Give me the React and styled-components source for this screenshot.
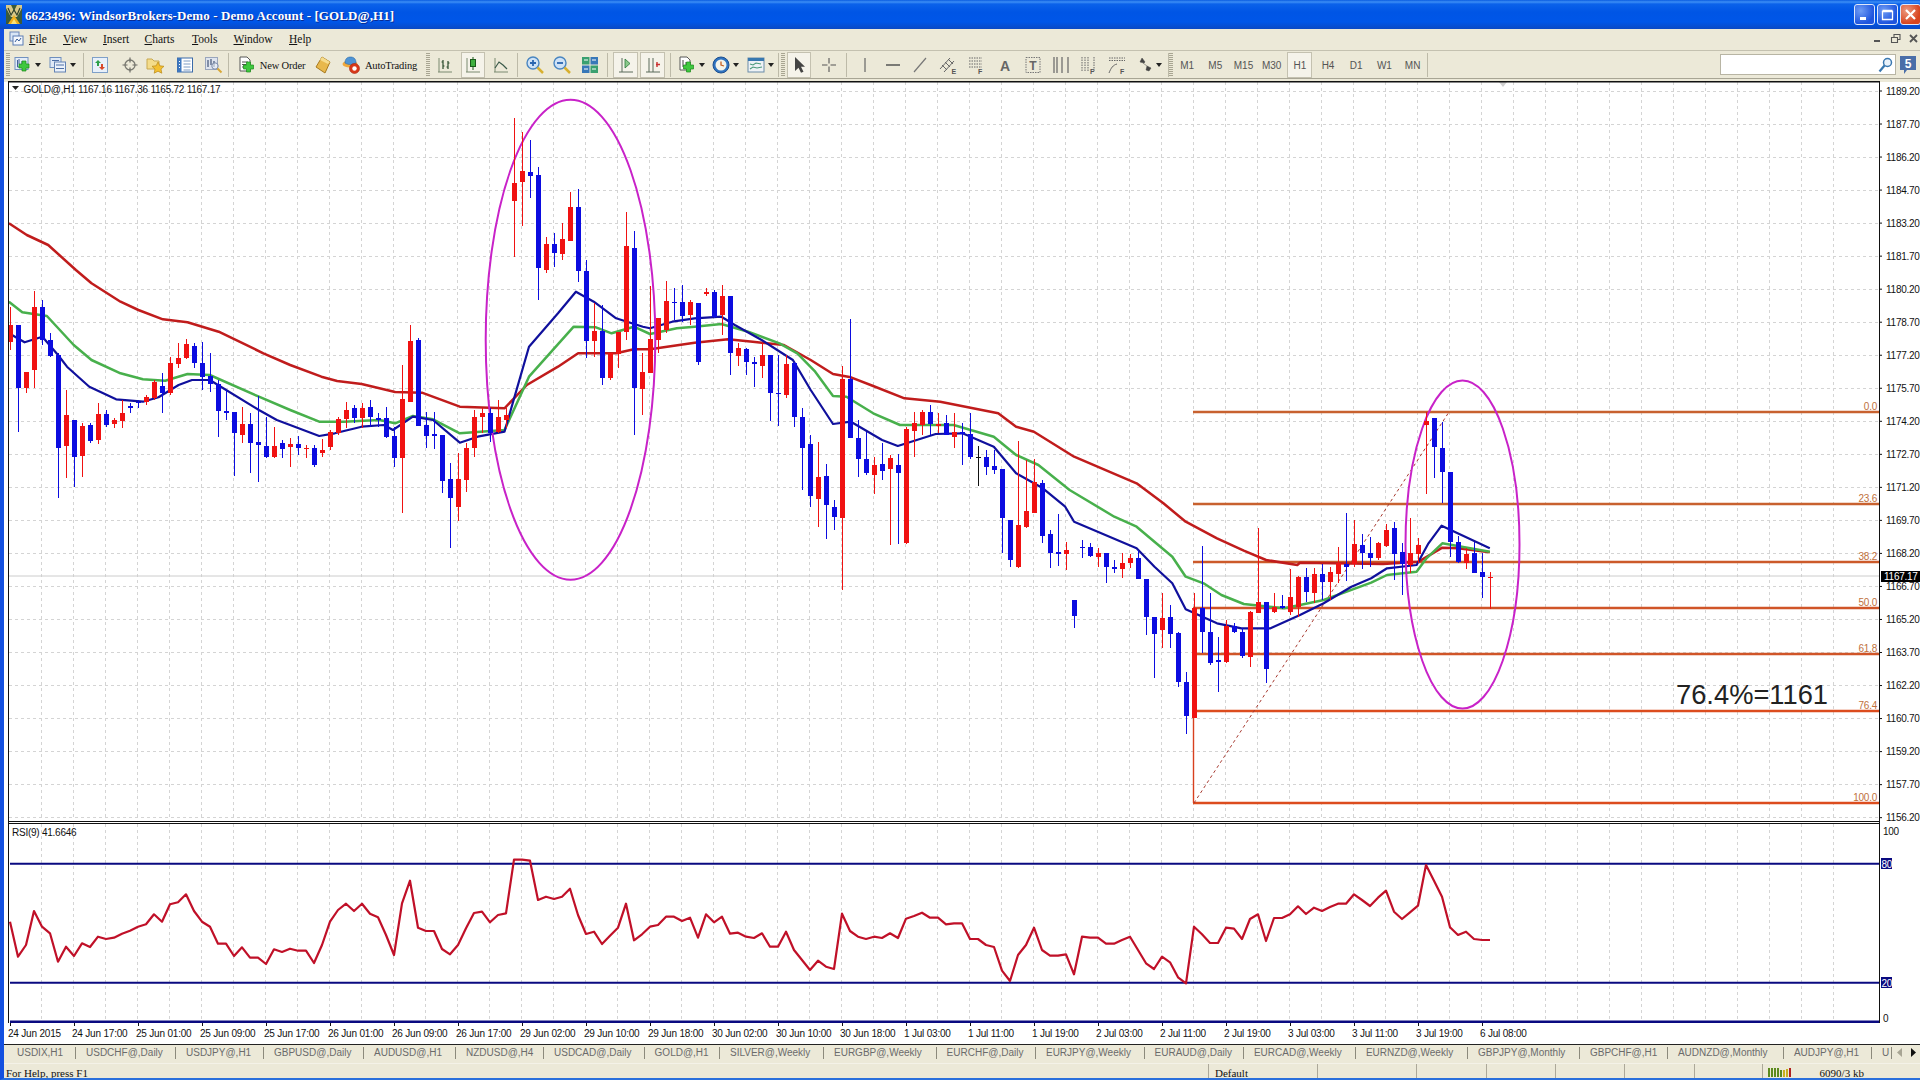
import React from 'react';
import styled, { createGlobalStyle } from 'styled-components';

const GlobalStyle = createGlobalStyle`
  html, body {
    margin: 0;
    padding: 0;
    background: #ece9d8;
    overflow: hidden;
  }
  * {
    box-sizing: border-box;
  }
`;

// chart data, read off the picture. y values are in "v" units: y = 80 + v / 3
const barsA = [
  ['r', 680, 735, 785, 810], ['b', 735, 735, 925, 1055], ['r', 875, 877, 925, 940], ['r', 632, 682, 870, 925],
  ['b', 660, 682, 780, 795], ['b', 760, 780, 828, 830], ['b', 820, 825, 1105, 1255], ['r', 930, 1005, 1098, 1195],
  ['b', 1020, 1020, 1130, 1222], ['r', 1030, 1038, 1128, 1190], ['b', 1030, 1035, 1082, 1090], ['r', 970, 1002, 1080, 1092],
  ['b', 990, 1003, 1035, 1040], ['r', 1015, 1020, 1032, 1045], ['r', 960, 998, 1022, 1045], ['b', 970, 978, 983, 998],
  ['b', 960, 965, 967, 985], ['r', 945, 952, 965, 975], ['r', 900, 905, 955, 960], ['b', 880, 918, 940, 998],
  ['r', 830, 848, 938, 945], ['r', 790, 835, 852, 865], ['r', 778, 792, 835, 838], ['b', 790, 798, 848, 865],
  ['b', 785, 850, 892, 930], ['b', 820, 888, 912, 935], ['b', 900, 912, 992, 1072], ['b', 930, 993, 998, 1020],
  ['b', 995, 995, 1060, 1188], ['r', 980, 1032, 1065, 1088], ['b', 1000, 1032, 1090, 1180], ['b', 948, 1086, 1094, 1205],
  ['b', 1010, 1098, 1130, 1135], ['r', 1040, 1098, 1130, 1135], ['b', 1080, 1090, 1106, 1135], ['r', 1075, 1092, 1100, 1162],
  ['b', 1068, 1093, 1105, 1125], ['r', 1095, 1103, 1106, 1135], ['b', 1095, 1103, 1155, 1160], ['r', 1078, 1110, 1118, 1130],
  ['r', 1050, 1057, 1100, 1110], ['r', 1010, 1018, 1060, 1065], ['r', 965, 990, 1018, 1045], ['b', 975, 985, 1015, 1030],
  ['r', 970, 985, 1015, 1045], ['b', 960, 982, 1010, 1040], ['b', 1000, 1015, 1020, 1040], ['b', 980, 1015, 1072, 1075],
  ['b', 1040, 1068, 1135, 1160], ['r', 855, 958, 1133, 1300], ['r', 735, 783, 965, 965], ['b', 775, 780, 1037, 1037],
  ['b', 995, 1035, 1068, 1103], ['b', 995, 1063, 1068, 1108], ['b', 1065, 1065, 1202, 1240], ['b', 1150, 1198, 1253, 1405],
  ['r', 1120, 1198, 1280, 1322], ['r', 1090, 1105, 1200, 1235], ['r', 990, 1012, 1103, 1130], ['r', 985, 998, 1012, 1060],
  ['b', 985, 1000, 1060, 1085], ['r', 960, 1012, 1055, 1060], ['r', 985, 1005, 1020, 1045], ['r', 115, 310, 362, 530],
  ['r', 155, 272, 305, 438], ['b', 180, 277, 287, 355], ['b', 262, 285, 563, 660], ['r', 472, 492, 570, 578],
  ['b', 460, 492, 520, 562], ['r', 430, 477, 522, 540], ['r', 335, 380, 482, 482], ['b', 327, 380, 572, 605],
  ['b', 540, 573, 782, 835], ['r', 670, 753, 782, 830], ['b', 675, 753, 893, 915], ['r', 818, 818, 895, 900],
  ['r', 760, 755, 822, 865], ['r', 395, 498, 755, 780], ['b', 452, 505, 925, 1065], ['r', 820, 877, 928, 1005],
  ['r', 618, 778, 878, 880], ['r', 715, 715, 780, 820], ['r', 603, 663, 750, 760], ['b', 625, 665, 670, 720],
  ['b', 615, 667, 707, 725], ['r', 660, 667, 705, 735], ['b', 668, 668, 845, 855], ['r', 625, 636, 640, 648],
  ['b', 630, 636, 710, 715], ['r', 615, 648, 705, 765], ['b', 648, 648, 820, 885], ['r', 790, 805, 828, 858]
];

// same thing, y = 300 + v / 3
const barsB = [
  ['b', 145, 147, 185, 225], ['b', 170, 186, 193, 262], ['r', 130, 165, 197, 235], ['b', 165, 165, 278, 362],
  ['b', 165, 278, 283, 378], ['r', 165, 192, 285, 295], ['b', 185, 188, 352, 380], ['b', 325, 352, 443, 570],
  ['b', 405, 432, 587, 622], ['r', 425, 532, 597, 680], ['b', 492, 528, 614, 718], ['b', 600, 622, 652, 690],
  ['r', 197, 237, 654, 870], ['b', 58, 237, 415, 415], ['b', 360, 415, 478, 532], ['b', 395, 477, 518, 525],
  ['r', 470, 495, 525, 582], ['b', 430, 492, 512, 540], ['r', 465, 475, 507, 735], ['b', 462, 495, 520, 732],
  ['r', 380, 388, 730, 732], ['r', 335, 370, 392, 470], ['r', 330, 337, 375, 405], ['b', 315, 337, 372, 405],
  ['r', 340, 372, 375, 400], ['b', 345, 370, 405, 405], ['r', 340, 397, 412, 445], ['b', 370, 397, 402, 495],
  ['b', 340, 403, 472, 477], ['k', 438, 470, 472, 558], ['b', 450, 472, 500, 525], ['b', 450, 497, 510, 522],
  ['b', 507, 507, 655, 760], ['b', 660, 660, 780, 800], ['r', 422, 675, 800, 805], ['r', 480, 632, 680, 685],
  ['r', 478, 545, 638, 640], ['b', 540, 548, 707, 728], ['b', 690, 702, 758, 805], ['b', 642, 757, 762, 798],
  ['r', 725, 750, 762, 810], ['b', 900, 900, 947, 985], ['b', 720, 740, 745, 775], ['b', 730, 742, 768, 770],
  ['r', 745, 760, 770, 800], ['b', 758, 760, 802, 848], ['b', 780, 802, 805, 820], ['r', 760, 790, 806, 835],
  ['r', 762, 775, 790, 805], ['b', 750, 775, 838, 838], ['b', 838, 838, 950, 1005], ['b', 950, 950, 1002, 1135],
  ['r', 878, 955, 990, 1045], ['b', 915, 950, 1003, 1045], ['b', 995, 998, 1145, 1160], ['b', 1115, 1145, 1248, 1302],
  ['r', 880, 925, 1255, 1255], ['b', 738, 925, 995, 1060], ['b', 880, 995, 1088, 1095], ['b', 1010, 1080, 1085, 1175],
  ['r', 960, 978, 1085, 1090], ['b', 970, 978, 995, 1000], ['b', 985, 995, 1068, 1075], ['r', 932, 936, 1070, 1100],
  ['r', 685, 905, 938, 940], ['b', 905, 907, 1108, 1150], ['r', 880, 922, 935, 938], ['b', 885, 918, 925, 928],
  ['r', 808, 892, 935, 945], ['r', 828, 832, 920, 950]
];

// y = 370 + v / 3
const barsC = [
  ['b', 595, 622, 665, 695], ['r', 595, 612, 668, 700], ['b', 582, 612, 635, 690], ['r', 590, 605, 635, 690],
  ['r', 530, 578, 612, 640], ['b', 428, 582, 590, 632], ['r', 450, 522, 583, 592], ['b', 492, 525, 550, 598],
  ['b', 502, 550, 565, 590], ['r', 515, 520, 565, 570], ['r', 462, 480, 527, 530], ['b', 455, 475, 552, 630],
  ['b', 520, 545, 582, 675], ['r', 445, 548, 585, 610], ['r', 505, 525, 552, 580], ['r', 125, 153, 165, 372],
  ['b', 145, 145, 230, 325], ['b', 155, 235, 305, 400], ['b', 305, 307, 515, 562], ['b', 498, 515, 575, 578],
  ['r', 535, 552, 578, 598], ['b', 515, 550, 608, 610], ['b', 548, 607, 622, 685], ['r', 605, 620, 622, 718]
];

const toBars = (list, base) => list.map(([c, hi, top, bot, lo]) => ({
  c,
  hi: base + hi / 3,
  top: base + top / 3,
  bot: base + bot / 3,
  lo: base + lo / 3
}));

const bars = [...toBars(barsA, 80), ...toBars(barsB, 300), ...toBars(barsC, 370)];

// moving averages in crop coordinates, three crops with their own scale
const pt4 = ([x, y]) => `${(x / 2.24).toFixed(1)},${(80 + y / 3).toFixed(1)}`;
const pt5 = ([x, y]) => `${(650 + x / 2.24).toFixed(1)},${(300 + y / 3).toFixed(1)}`;
const pt6 = ([x, y]) => `${(1300 + x / 2.529).toFixed(1)},${(370 + y / 3).toFixed(1)}`;
const line = (a, b, c) => [...a.map(pt4), ...b.map(pt5), ...c.map(pt6)].join(' ');

const redMa = line(
  [[20, 430], [60, 465], [108, 495], [170, 570], [205, 610], [270, 665], [310, 690], [365, 718], [420, 727], [490, 755], [590, 820], [650, 855], [720, 890], [755, 903], [810, 912], [885, 936], [945, 938], [1030, 980], [1130, 985], [1180, 915], [1250, 860], [1295, 820], [1380, 820], [1420, 808]],
  [[0, 148], [100, 128], [175, 118], [230, 125], [300, 135], [360, 180], [410, 222], [450, 232], [500, 258], [570, 295], [650, 305], [780, 340], [820, 380], [860, 395], [950, 470], [1090, 550], [1150, 610], [1200, 665], [1270, 715], [1330, 752], [1380, 780], [1450, 795]],
  [[0, 578], [210, 582], [300, 575], [360, 533], [400, 535], [480, 547]]
);

const greenMa = line(
  [[20, 665], [50, 697], [105, 708], [165, 795], [205, 840], [270, 880], [320, 898], [370, 902], [420, 882], [470, 885], [580, 950], [650, 990], [715, 1025], [770, 1025], [850, 1020], [885, 1030], [925, 1008], [970, 1018], [1030, 1060], [1130, 1050], [1185, 890], [1285, 740], [1335, 742], [1370, 760], [1420, 740]],
  [[0, 102], [60, 85], [100, 80], [160, 72], [220, 95], [290, 130], [330, 160], [370, 215], [410, 288], [440, 290], [500, 340], [560, 375], [680, 375], [770, 410], [820, 465], [870, 495], [940, 570], [1040, 650], [1090, 680], [1170, 770], [1200, 830], [1240, 850], [1280, 885], [1330, 912], [1420, 925]],
  [[0, 705], [60, 690], [180, 638], [220, 615], [295, 605], [320, 565], [360, 520], [480, 545]]
);

const blueMa = line(
  [[20, 760], [55, 787], [95, 770], [130, 825], [150, 860], [200, 920], [260, 958], [320, 965], [355, 952], [400, 915], [430, 900], [470, 900], [580, 990], [620, 1020], [715, 1068], [750, 1060], [810, 1040], [860, 1035], [880, 1050], [925, 1010], [970, 1020], [1030, 1088], [1070, 1070], [1130, 1055], [1185, 800], [1250, 700], [1290, 635], [1330, 665], [1380, 715], [1440, 740]],
  [[0, 85], [50, 65], [100, 55], [160, 50], [190, 75], [250, 120], [285, 150], [320, 180], [360, 270], [410, 372], [450, 365], [520, 420], [555, 438], [640, 402], [700, 400], [770, 440], [820, 520], [880, 565], [930, 620], [950, 665], [1090, 745], [1130, 800], [1170, 850], [1200, 928], [1270, 970], [1325, 985], [1390, 985]],
  [[0, 735], [60, 700], [130, 650], [180, 625], [220, 595], [295, 585], [325, 520], [358, 467], [480, 535]]
);

// RSI, one value per bar, y = 815 + v / 3
const rsi = [
  320, 425, 390, 288, 335, 355, 440, 395, 423, 385, 396, 365, 372, 368, 356, 347, 335, 328, 298, 320, 268, 262, 238, 288, 320, 335, 386, 386, 423, 397,
  428, 428, 447, 403, 411, 401, 407, 407, 444, 390, 320, 285, 266, 288, 266, 296, 307, 360, 420, 265, 197, 338, 348, 348, 402, 418, 390, 340, 294, 290,
  322, 300, 295, 134, 134, 137, 255, 245, 252, 245, 221, 300, 357, 350, 387, 362, 338, 266, 376, 358, 335, 330, 305, 305, 318, 308, 368,
  298, 322, 305, 356, 353, 365, 369, 355, 395, 395, 350, 405, 435, 465, 437, 455, 462, 296, 348, 365, 372, 365, 369, 355, 369, 311, 303, 293, 308, 308,
  328, 325, 325, 372, 372, 390, 396, 467, 498, 420, 390, 338, 405, 422, 422, 418, 478, 365, 368, 368, 386, 386, 375, 365, 405, 445, 462, 425, 442, 487,
  505, 335, 358, 384, 384, 338, 341, 372, 312, 298, 378, 309, 309, 298, 274, 297, 278, 288, 276, 266, 266, 238, 255, 273, 248, 227, 290,
  312, 292, 272, 150, 197, 245, 337, 360, 350, 372, 375, 375
];

const barX = i => 10 + 8 * i;
const PLOT_RIGHT = 1879;

const priceTicks = Array.from({ length: 23 }, (_, k) => ({
  label: (1189.2 - 1.5 * k).toFixed(2),
  y: 91 + 33.03 * k
}));
const gridXs = Array.from({ length: 58 }, (_, k) => 9.5 + 32 * k);

const fibs = [
  { label: '0.0', y: 412, color: '#c8612f' },
  { label: '23.6', y: 504, color: '#c8612f' },
  { label: '38.2', y: 562, color: '#cc5a2a' },
  { label: '50.0', y: 608, color: '#d05528' },
  { label: '61.8', y: 654, color: '#d05528' },
  { label: '76.4', y: 711, color: '#dc4c1e' },
  { label: '100.0', y: 803, color: '#dc4c1e' }
];

const timeLabels = [
  '24 Jun 2015', '24 Jun 17:00', '25 Jun 01:00', '25 Jun 09:00', '25 Jun 17:00', '26 Jun 01:00', '26 Jun 09:00', '26 Jun 17:00',
  '29 Jun 02:00', '29 Jun 10:00', '29 Jun 18:00', '30 Jun 02:00', '30 Jun 10:00', '30 Jun 18:00', '1 Jul 03:00', '1 Jul 11:00',
  '1 Jul 19:00', '2 Jul 03:00', '2 Jul 11:00', '2 Jul 19:00', '3 Jul 03:00', '3 Jul 11:00', '3 Jul 19:00', '6 Jul 08:00'
];

const tabs = [
  ['USDIX,H1', 69], ['USDCHF@,Daily', 100], ['USDJPY@,H1', 88], ['GBPUSD@,Daily', 100], ['AUDUSD@,H1', 92], ['NZDUSD@,H4', 88],
  ['USDCAD@,Daily', 100.6], ['GOLD@,H1', 75.4], ['SILVER@,Weekly', 104], ['EURGBP@,Weekly', 112.6], ['EURCHF@,Daily', 99.4],
  ['EURJPY@,Weekly', 108.6], ['EURAUD@,Daily', 99.4], ['EURCAD@,Weekly', 112], ['EURNZD@,Weekly', 112], ['GBPJPY@,Monthly', 112],
  ['GBPCHF@,H1', 88], ['AUDNZD@,Monthly', 116], ['AUDJPY@,H1', 88]
];

const Window = styled.div`
  width: 1920px;
  height: 1080px;
  display: flex;
  flex-direction: column;
  overflow: hidden;
`;

const TitleBar = styled.div`
  height: 29px;
  flex: none;
  display: flex;
  align-items: center;
  padding-left: 6px;
  gap: 3px;
  background: linear-gradient(
    to bottom,
    #0a5ce0 0,
    #3d8ff5 2px,
    #0b62ea 4px,
    #0055e5 12px,
    #0056e8 22px,
    #0a49c4 29px
  );
`;

const TitleText = styled.div`
  margin-top: 2px;
  font: bold 13px 'Liberation Serif', serif;
  letter-spacing: 0.09px;
  color: #fff;
  text-shadow: 1px 1px 0 #0a2a90;
  white-space: nowrap;
`;

const CaptionButtons = styled.div`
  margin-left: auto;
  display: flex;
  gap: 2px;
  align-items: center;
  margin-right: -1px;
`;

const CaptionButton = styled.div`
  width: 21px;
  height: 21px;
  border: 1px solid #dfe8fa;
  border-radius: 3px;
  display: flex;
  align-items: center;
  justify-content: center;
  background: ${p => (p.$close
    ? 'radial-gradient(circle at 30% 30%, #ec9a80, #d8441e 70%)'
    : 'radial-gradient(circle at 30% 30%, #6f9cf4, #1f55de 70%)')};
`;

const Body = styled.div`
  flex: 1;
  min-height: 0;
  display: flex;
  flex-direction: column;
  border-left: 4px solid #1450e0;
  border-bottom: 2px solid #2a6fdc;
`;

const MenuBar = styled.div`
  height: 21px;
  flex: none;
  display: flex;
  align-items: center;
  padding-bottom: 2px;
  background: #ece9d8;
`;

const MenuIcon = styled.div`
  width: 25px;
  padding-left: 5px;
  display: flex;
`;

const MenuItem = styled.div`
  width: ${p => p.$w}px;
  font: 11.5px 'Liberation Serif', serif;
  color: #111;

  &::first-letter {
    text-decoration: underline;
  }
`;

const ChildControls = styled.div`
  margin-left: auto;
  display: flex;
  gap: 3px;
  margin-right: -1px;
`;

const ChildControl = styled.div`
  width: 15px;
  height: 15px;
  display: flex;
  align-items: center;
  justify-content: center;
`;

const Toolbar = styled.div`
  height: 31px;
  flex: none;
  display: flex;
  align-items: flex-start;
  padding-top: 1px;
  background: linear-gradient(to bottom, #ece9d8 0, #ece9d8 27px, #a8a594 27px, #a8a594 28px, #ece9d8 28px);
  border-top: 1px solid #c4c1b0;
`;

const ToolButton = styled.div`
  width: ${p => p.$w}px;
  height: 26px;
  flex: none;
  margin-left: ${p => p.$ml || 0}px;
  display: flex;
  align-items: center;
  justify-content: center;
  gap: ${p => p.$gap || 0}px;
  border: 1px solid ${p => (p.$on ? '#c4c1b0' : 'transparent')};
  background: ${p => (p.$on ? '#f5f3ea' : 'transparent')};
`;

const ToolLabel = styled.span`
  font: 10.5px 'Liberation Serif', serif;
  letter-spacing: -0.15px;
  color: #111;
  white-space: nowrap;
`;

const Divider = styled.div`
  width: ${p => p.$w}px;
  height: 26px;
  flex: none;
  background: linear-gradient(#bdbaa8, #bdbaa8) center / 1px 24px no-repeat;
`;

const Grip = styled.div`
  width: ${p => p.$w}px;
  height: 26px;
  flex: none;
  background: repeating-linear-gradient(to bottom, #a8a592 0 1px, transparent 1px 2px) center / 4px 24px no-repeat;
`;

const PeriodButton = styled.div`
  width: 25px;
  height: 26px;
  margin: 0 1.6px;
  flex: none;
  display: flex;
  align-items: center;
  justify-content: center;
  font: 10px 'Liberation Sans', sans-serif;
  color: #555;
  border: 1px solid ${p => (p.$on ? '#c4c1b0' : 'transparent')};
  background: ${p => (p.$on ? '#f5f3ea' : 'transparent')};
`;

const SearchBox = styled.div`
  width: 176px;
  height: 21px;
  margin: 2px 0 0 auto;
  flex: none;
  display: flex;
  align-items: center;
  justify-content: flex-end;
  padding-right: 2px;
  background: #fff;
  border: 1px solid #b8b5a4;
`;

const CommunityButton = styled.div`
  width: 24px;
  height: 24px;
  margin-top: 1px;
  flex: none;
  display: flex;
  align-items: center;
  justify-content: center;
`;

const ChartSvg = styled.svg`
  display: block;
  flex: none;
  background: #fff;
`;

const AxisText = styled.text`
  font: 10px 'Liberation Sans', sans-serif;
  letter-spacing: -0.25px;
  fill: ${p => p.$fill || '#111'};
`;

const NoteText = styled.text`
  font: 27.3px 'Liberation Sans', sans-serif;
  fill: #222;
`;

const TimeAxis = styled.div`
  height: 21px;
  flex: none;
  display: flex;
  background: #fff;
  padding-left: 4px;
`;

const TimeLabel = styled.div`
  width: 64px;
  flex: none;
  padding-top: 5px;
  font: 10px 'Liberation Sans', sans-serif;
  letter-spacing: -0.2px;
  color: #111;
  white-space: nowrap;
  background: linear-gradient(#111, #111) 1.5px 0 / 1px 3px no-repeat;
`;

const TabBar = styled.div`
  height: 19px;
  flex: none;
  display: flex;
  align-items: center;
  padding: 0 0 3px 3px;
  background: #ece9d8;
  border-top: 1px solid #222;
`;

const Tab = styled.div`
  width: ${p => p.$w}px;
  height: 12px;
  flex: none;
  display: flex;
  align-items: center;
  padding-left: 10px;
  font: 10px 'Liberation Sans', sans-serif;
  color: #6b6b6b;
  border-right: 1px solid #8c8a7c;
  white-space: nowrap;
  overflow: hidden;
`;

const TabArrows = styled.div`
  margin-left: auto;
  display: flex;
  gap: 9px;
  padding-right: 4px;
`;

const StatusBar = styled.div`
  height: 15px;
  flex: none;
  display: flex;
  background: #ece9d8;
  overflow: hidden;
  border-top: 1px solid #f4f2e8;
`;

const StatusCell = styled.div`
  width: ${p => (p.$w ? `${p.$w}px` : 'auto')};
  flex: ${p => (p.$w ? 'none' : 1)};
  display: flex;
  gap: 29px;
  align-items: flex-start;
  padding: 3px 0 0 ${p => p.$pad || 0}px;
  font: 11px/13px 'Liberation Serif', serif;
  color: #111;
  white-space: nowrap;
  border-right: ${p => (p.$w ? '1px solid #aca899' : 'none')};
`;

const Icon = ({ w = 18, h = 18, children }) => (
  <svg width={w} height={h} viewBox={`0 0 ${w} ${h}`}>{children}</svg>
);

const Caret = () => (
  <svg width="6" height="4" viewBox="0 0 6 4"><path d="M0 0h6L3 4z" fill="#222" /></svg>
);

const GreenPlus = ({ x = 8, y = 8 }) => (
  <path
    d={`M${x + 3} ${y}h4v3h3v4h-3v3h-4v-3h-3v-4h3z`}
    fill="#3fc83f"
    stroke="#1b8a1b"
    strokeWidth="0.7"
  />
);

const WindowLogo = () => (
  <svg width="16" height="19" viewBox="0 0 16 19">
    <rect width="16" height="19" fill="#3b5a3a" />
    <path d="M0 0h5l3 6 3-6h5v3l-5 9H5L0 3z" fill="#d8c88a" />
    <path d="M2 3l3 7 3-5 3 5 3-7" fill="none" stroke="#30402c" strokeWidth="1.2" />
    <path d="M2 19l6-9 6 9z" fill="#f0b020" />
    <path d="M5 19l3-5 3 5z" fill="#fbe27a" />
  </svg>
);

const MiniChartIcon = () => (
  <svg width="15" height="15" viewBox="0 0 15 15">
    <rect x="1" y="1" width="9" height="9" fill="#d9e6f6" stroke="#6a86b8" />
    <rect x="4" y="5" width="10" height="9" fill="#f4f7fc" stroke="#5b7db4" />
    <path d="M6 11l2-3 2 2 2-3" fill="none" stroke="#3a5f9a" />
  </svg>
);

const icons = {
  newChart: (
    <Icon>
      <rect x="1" y="1.5" width="13" height="12" fill="#e4edf8" stroke="#7191bf" />
      <path d="M3.5 4v7h8M5 3v5M8 5v4" fill="none" stroke="#43639a" />
      <GreenPlus x={5} y={5} />
    </Icon>
  ),
  profiles: (
    <Icon>
      <rect x="1" y="1.5" width="11" height="10" fill="#dfe9f6" stroke="#6f8fbe" />
      <rect x="5.5" y="6" width="11" height="10" fill="#eaf1fa" stroke="#6282b4" />
      <path d="M3 4.5h7M7 9h8M7 12.5h8" stroke="#4d6fa6" />
    </Icon>
  ),
  market: (
    <Icon>
      <rect x="1.5" y="1.5" width="15" height="15" fill="#e8f0fa" stroke="#7fa0c8" />
      <path d="M7 4l-3 3h2v3h2V7h2z" fill="#2ea04a" />
      <path d="M11 14l3-3h-2V8h-2v3H8z" fill="#d8482a" />
    </Icon>
  ),
  navigator: (
    <Icon>
      <circle cx="9" cy="9" r="5" fill="none" stroke="#7a7a72" strokeWidth="1.3" />
      <path d="M9 1.5v5M9 11.5v5M1.5 9h5M11.5 9h5" stroke="#6b6b64" strokeWidth="1.2" />
    </Icon>
  ),
  favorites: (
    <Icon w={20} h={18}>
      <path d="M1 3h5l2 2h5v8H1z" fill="#f4dc8a" stroke="#c8a850" />
      <path d="M12 6l1.8 3.8 4.2.5-3 2.8.8 4.1-3.8-2-3.8 2 .8-4.1-3-2.8 4.2-.5z" fill="#f4c030" stroke="#b88818" strokeWidth="0.7" />
    </Icon>
  ),
  terminal: (
    <Icon>
      <rect x="1.5" y="2" width="15" height="14" fill="#fff" stroke="#3a6aa8" />
      <rect x="1.5" y="2" width="4" height="14" fill="#3e78c0" />
      <path d="M7.5 5h7M7.5 8h7M7.5 11h7M7.5 14h7" stroke="#7c9cc4" />
      <path d="M3.5 5v8" stroke="#fff" strokeDasharray="1 2" />
    </Icon>
  ),
  tester: (
    <Icon w={19} h={18}>
      <rect x="1.5" y="1.5" width="12" height="12" fill="#dee4ee" stroke="#9aa6bc" />
      <path d="M4 4v7M7 3v6M10 5v6" stroke="#5a6a88" strokeWidth="1.4" />
      <circle cx="11" cy="10" r="3.2" fill="#eef3fa" fillOpacity="0.6" stroke="#7a8aa8" />
      <path d="M13.5 12.5l4 4" stroke="#d8a838" strokeWidth="2" />
    </Icon>
  ),
  newOrder: (
    <Icon>
      <path d="M2 1h7l3 3v11H2z" fill="#fff" stroke="#585858" />
      <path d="M4 6h6M4 8.5h4M4 11h3" stroke="#555" />
      <GreenPlus x={5.5} y={6} />
    </Icon>
  ),
  editor: (
    <Icon>
      <path d="M8 1l8 5-5 11-9-6z" fill="#e8b84c" stroke="#a87a20" />
      <path d="M8 1l8 5-2 2-8-4z" fill="#f6dc8c" />
    </Icon>
  ),
  auto: (
    <Icon>
      <ellipse cx="8" cy="8" rx="7.5" ry="3.6" fill="#f0a83c" />
      <path d="M3 7c0-4 2-6 5.5-6S14 3 14 7c-3.5 2-7.5 2-11 0z" fill="#4f94d4" stroke="#2a6aa8" strokeWidth="0.6" />
      <circle cx="12.5" cy="12.5" r="5" fill="#d83818" stroke="#a82410" strokeWidth="0.6" />
      <circle cx="12.5" cy="12.5" r="2.2" fill="#fff" />
    </Icon>
  ),
  bars: (
    <Icon>
      <path d="M2 16h14M3 2v14" stroke="#7a8a70" />
      <path d="M7 4v9M5.5 6H7M7 10h1.5M12 5v8M10.5 11H12M12 7h1.5" stroke="#2a4a2a" strokeWidth="1.2" />
    </Icon>
  ),
  candles: (
    <Icon>
      <path d="M2 16h14M3 2v14" stroke="#7a8a70" />
      <path d="M9 1v13" stroke="#1a5a1a" />
      <rect x="6.5" y="3.5" width="5" height="7" fill="#3fb03f" stroke="#1a5a1a" />
    </Icon>
  ),
  lineChart: (
    <Icon>
      <path d="M2 16h14M3 2v14" stroke="#7a8a70" />
      <path d="M3 12l4-6 4 3 4 4" fill="none" stroke="#3a5a4a" strokeWidth="1.2" />
    </Icon>
  ),
  zoomIn: (
    <Icon w={20} h={20}>
      <circle cx="8" cy="8" r="6" fill="#cfe2f6" stroke="#4a86c0" strokeWidth="1.4" />
      <path d="M5 8h6M8 5v6" stroke="#2a66b0" strokeWidth="1.8" />
      <path d="M12.5 12.5l5.5 5.5" stroke="#d8b030" strokeWidth="2.5" />
    </Icon>
  ),
  zoomOut: (
    <Icon w={20} h={20}>
      <circle cx="8" cy="8" r="6" fill="#cfe2f6" stroke="#4a86c0" strokeWidth="1.4" />
      <path d="M5 8h6" stroke="#2a66b0" strokeWidth="1.8" />
      <path d="M12.5 12.5l5.5 5.5" stroke="#d8b030" strokeWidth="2.5" />
    </Icon>
  ),
  tile: (
    <Icon>
      <rect x="1" y="1" width="7.5" height="7.5" fill="#3aa070" />
      <rect x="9.5" y="1" width="7.5" height="7.5" fill="#3878b8" />
      <rect x="1" y="9.5" width="7.5" height="7.5" fill="#3878b8" />
      <rect x="9.5" y="9.5" width="7.5" height="7.5" fill="#3aa070" />
      <path d="M3 4h4M11 4h4M3 13h4M11 13h4" stroke="#fff" />
    </Icon>
  ),
  shift: (
    <Icon>
      <path d="M2 16h14M5 2v14" stroke="#5a6a5a" />
      <path d="M8 3v9l5-4.5z" fill="#8ac88a" stroke="#2a7a3a" strokeWidth="0.8" />
    </Icon>
  ),
  scroll: (
    <Icon>
      <path d="M2 16h14M5 2v14M9 2v14" stroke="#5a6a5a" />
      <path d="M12 8.5h4M13 6v5" stroke="#c83030" strokeWidth="1.4" />
    </Icon>
  ),
  indicators: (
    <Icon>
      <path d="M2 1h7l3 3v10H2z" fill="#fff" stroke="#585858" />
      <path d="M5 4v7M8 6v5" stroke="#444" />
      <GreenPlus x={5.5} y={6} />
    </Icon>
  ),
  clock: (
    <Icon>
      <circle cx="9" cy="9" r="8" fill="#2f73c0" stroke="#1d4f8f" />
      <circle cx="9" cy="9" r="5.5" fill="#f4f4ea" />
      <path d="M9 5.5V9l3 1" fill="none" stroke="#c86020" strokeWidth="1.3" />
    </Icon>
  ),
  template: (
    <Icon>
      <rect x="1" y="2" width="16" height="14" fill="#eef2f6" stroke="#6a8ca8" />
      <rect x="1" y="2" width="16" height="3" fill="#3878b0" />
      <path d="M3 8l3 1 3-2 5 1M3 13l3-2 4 1 5-1" fill="none" stroke="#4a9a7a" strokeWidth="1.1" />
    </Icon>
  ),
  cursor: (
    <Icon>
      <path d="M5 1v14l3.5-3.2 2.5 5 2.500-1-2.500-5H15z" fill="#444" />
    </Icon>
  ),
  cross: (
    <Icon>
      <path d="M9 2v5.5M9 10.5V16M2 9h5.5M10.5 9H16" stroke="#555" strokeWidth="1.1" />
    </Icon>
  ),
  vline: (<Icon><path d="M9 2v14" stroke="#666" strokeWidth="1.2" /></Icon>),
  hline: (<Icon><path d="M2 9h14" stroke="#555" strokeWidth="1.5" /></Icon>),
  trend: (<Icon><path d="M3 16L15 2" stroke="#777" strokeWidth="1.2" /></Icon>),
  channel: (
    <Icon>
      <path d="M1 13L11 2M5 16L15 5M3 9l5 5M6 6l5 5M9 3l5 5" stroke="#666" strokeWidth="1" />
      <text x="12.5" y="17.5" fontFamily="Liberation Sans" fontSize="7" fontWeight="bold" fill="#555">E</text>
    </Icon>
  ),
  fib: (
    <Icon>
      <path d="M2 2h13M2 5h13M2 8h13M2 11h13" stroke="#666" strokeDasharray="1.5 1" />
      <text x="11" y="17.5" fontFamily="Liberation Sans" fontSize="7" fontWeight="bold" fill="#555">F</text>
    </Icon>
  ),
  textA: (
    <Icon>
      <text x="9" y="15" textAnchor="middle" fontFamily="Liberation Sans" fontSize="14" fontWeight="bold" fill="#666">A</text>
    </Icon>
  ),
  textT: (
    <Icon>
      <rect x="2" y="1.5" width="14" height="15" fill="none" stroke="#777" strokeDasharray="1.5 1" />
      <text x="9" y="14" textAnchor="middle" fontFamily="Liberation Sans" fontSize="12" fontWeight="bold" fill="#666">T</text>
    </Icon>
  ),
  cycle: (
    <Icon><path d="M2 1v16M5 1v16M10 1v16M16 1v16" stroke="#666" strokeWidth="1.2" /></Icon>
  ),
  fibTime: (
    <Icon>
      <path d="M2 1v14M5 1v14M8 1v14M14 1v14" stroke="#666" strokeDasharray="1.5 1" />
      <text x="10" y="17.5" fontFamily="Liberation Sans" fontSize="7" fontWeight="bold" fill="#555">F</text>
    </Icon>
  ),
  fibArc: (
    <Icon>
      <path d="M1 2h16M1 4.5h16" stroke="#666" strokeDasharray="1.5 1" />
      <path d="M1 17c2-5 4-8 8-9" fill="none" stroke="#666" />
      <text x="12" y="17.5" fontFamily="Liberation Sans" fontSize="7" fontWeight="bold" fill="#555">F</text>
    </Icon>
  ),
  arrows: (
    <Icon>
      <path d="M6 2l3 4-1 1-4-1zM11 10l4 2-2 3-3-1zM7 7l4 3" fill="#444" stroke="#444" strokeWidth="0.5" />
    </Icon>
  ),
  search: (
    <svg width="15" height="16" viewBox="0 0 15 16">
      <circle cx="9.5" cy="5.5" r="4" fill="#eaf3fb" stroke="#3a78b0" strokeWidth="1.5" />
      <path d="M6.5 8.5L1.5 14.5" stroke="#3a78b0" strokeWidth="2.2" />
    </svg>
  ),
  community: (
    <svg width="20" height="20" viewBox="0 0 20 20">
      <path d="M2 1h16v14H9l-3 4v-4H2z" fill="#4a6ea8" />
      <text x="10" y="12.5" textAnchor="middle" fontFamily="Liberation Sans" fontSize="12" fontWeight="bold" fill="#fff">5</text>
    </svg>
  )
};

const Candle = ({ bar, i }) => {
  const color = { r: '#f01212', b: '#0c0ce0', k: '#111' }[bar.c];
  const x = barX(i);
  return (
    <g shapeRendering="crispEdges">
      <rect x={x} y={bar.hi} width="1" height={Math.max(bar.lo - bar.hi, 1)} fill={color} />
      <rect x={x - 2} y={bar.top} width="5" height={Math.max(bar.bot - bar.top, 1.5)} fill={color} />
    </g>
  );
};

const DashedGrid = ({ top, bottom, rows }) => (
  <g stroke="#d4d4d4" strokeDasharray="3 3" shapeRendering="crispEdges">
    {gridXs.filter(x => x > 10).map(x => (
      <line key={x} x1={x} x2={x} y1={top} y2={bottom} />
    ))}
    {rows && priceTicks.map(t => (
      <line key={t.label} x1="9" x2={PLOT_RIGHT} y1={t.y} y2={t.y} />
    ))}
  </g>
);

const MaLine = ({ points, color, width }) => (
  <polyline points={points} fill="none" stroke={color} strokeWidth={width} strokeLinejoin="round" />
);

const PriceChart = () => (
  <ChartSvg width="1916" height="742" viewBox="4 81 1916 742">
    <DashedGrid top={82} bottom={820} rows />
    <line x1="9" x2={PLOT_RIGHT} y1="576" y2="576" stroke="#cccccc" />

    {fibs.map(f => (
      <line key={f.label} x1="1193" x2={PLOT_RIGHT} y1={f.y} y2={f.y} stroke={f.color} strokeWidth="2.4" />
    ))}
    <line x1="1193.5" x2="1193.5" y1="608" y2="803" stroke="#d8401e" strokeWidth="1.4" />
    <line x1="1194" y1="803" x2="1449" y2="412" stroke="#a83a30" strokeDasharray="3 3" />

    <MaLine points={redMa} color="#c01c1c" width={2.5} />
    <MaLine points={greenMa} color="#48b04c" width={2.5} />
    <MaLine points={blueMa} color="#10109c" width={2.2} />

    <ellipse cx="570.5" cy="339.7" rx="84.8" ry="240" fill="none" stroke="#c822c8" strokeWidth="2" />
    <ellipse cx="1462.5" cy="544.5" rx="57" ry="164" fill="none" stroke="#c822c8" strokeWidth="2" />

    {bars.map((bar, i) => <Candle key={i} bar={bar} i={i} />)}

    <path d="M12 86h7l-3.5 4z" fill="#222" />
    <AxisText x="23.5" y="92.5">GOLD@,H1  1167.16 1167.36 1165.72 1167.17</AxisText>
    <path d="M1499 82h8l-4 5z" fill="#d0d0d0" />

    {fibs.map(f => (
      <AxisText key={f.label} x="1877" y={f.y - 2} textAnchor="end" $fill="#c0703c">{f.label}</AxisText>
    ))}
    <NoteText x="1676" y="704">76.4%=1161</NoteText>

    <rect x="4" y="81" width="1916" height="1" fill="#ece9d8" />
    <rect x="8" y="81" width={PLOT_RIGHT - 8} height="1.5" fill="#111" />
    <rect x="8" y="81" width="1" height="742" fill="#111" />
    <rect x={PLOT_RIGHT} y="81" width="1" height="742" fill="#111" />
    <rect x="8" y="821" width={PLOT_RIGHT - 8} height="1" fill="#111" />

    {priceTicks.map(t => (
      <g key={t.label}>
        <line x1={PLOT_RIGHT} x2={PLOT_RIGHT + 3} y1={t.y} y2={t.y} stroke="#111" />
        <AxisText x="1886" y={t.y + 3.5}>{t.label}</AxisText>
      </g>
    ))}
    <rect x="1881" y="571" width="39" height="11" fill="#000" />
    <AxisText x="1884" y="580" $fill="#fff">1167.17</AxisText>
  </ChartSvg>
);

const RsiChart = () => (
  <ChartSvg width="1916" height="200" viewBox="4 823 1916 200">
    <DashedGrid top={824} bottom={1021} />
    <g stroke="#0a0a80" strokeWidth="2">
      <line x1="10" x2={PLOT_RIGHT} y1="863.7" y2="863.7" />
      <line x1="10" x2={PLOT_RIGHT} y1="982.7" y2="982.7" />
    </g>
    <MaLine
      points={rsi.map((v, i) => `${barX(i)},${(815 + v / 3).toFixed(1)}`).join(' ')}
      color="#c01028"
      width={2.2}
    />
    <rect x="10" y="1020.5" width={PLOT_RIGHT - 10} height="3" fill="#0a0a80" />
    <AxisText x="12" y="835.5">RSI(9) 41.6646</AxisText>

    <rect x="8" y="823" width={PLOT_RIGHT - 8} height="1" fill="#111" />
    <rect x="8" y="823" width="1" height="200" fill="#111" />
    <rect x={PLOT_RIGHT} y="823" width="1" height="200" fill="#111" />

    <AxisText x="1883" y="834.5">100</AxisText>
    <rect x="1881" y="858" width="11" height="11" fill="#0a0a80" />
    <AxisText x="1881.5" y="867.5" $fill="#fff">80</AxisText>
    <rect x="1881" y="977" width="11" height="11" fill="#0a0a80" />
    <AxisText x="1881.5" y="986.5" $fill="#fff">20</AxisText>
    <AxisText x="1883" y="1022">0</AxisText>
  </ChartSvg>
);

const menus = [['File', 34], ['View', 40], ['Insert', 41.5], ['Charts', 47.5], ['Tools', 41.5], ['Window', 55.5], ['Help', 30]];
const periods = ['M1', 'M5', 'M15', 'M30', 'H1', 'H4', 'D1', 'W1', 'MN'];

const App = () => (
  <Window>
    <GlobalStyle />
    <TitleBar>
      <WindowLogo />
      <TitleText>6623496: WindsorBrokers-Demo - Demo Account - [GOLD@,H1]</TitleText>
      <CaptionButtons>
        <CaptionButton>
          <svg width="13" height="13" viewBox="0 0 13 13"><rect x="2" y="9" width="6" height="3" fill="#fff" /></svg>
        </CaptionButton>
        <CaptionButton>
          <svg width="13" height="13" viewBox="0 0 13 13"><path d="M1.5 3.5h10v8h-10zM1.5 2.5h10" fill="none" stroke="#fff" strokeWidth="1.3" /></svg>
        </CaptionButton>
        <CaptionButton $close>
          <svg width="13" height="13" viewBox="0 0 13 13"><path d="M2 2l9 9M11 2l-9 9" stroke="#fff" strokeWidth="2.2" /></svg>
        </CaptionButton>
      </CaptionButtons>
    </TitleBar>
    <Body>
      <MenuBar>
        <MenuIcon><MiniChartIcon /></MenuIcon>
        {menus.map(([name, w]) => <MenuItem key={name} $w={w}>{name}</MenuItem>)}
        <ChildControls>
          <ChildControl>
            <svg width="11" height="11" viewBox="0 0 11 11"><path d="M2 8h6" stroke="#555" strokeWidth="2" /></svg>
          </ChildControl>
          <ChildControl>
            <svg width="11" height="11" viewBox="0 0 11 11"><path d="M1.5 4.5h6v5h-6zM4 4V1.5h6v5H8" fill="none" stroke="#555" strokeWidth="1.1" /></svg>
          </ChildControl>
          <ChildControl>
            <svg width="11" height="11" viewBox="0 0 11 11"><path d="M2 2l7 7M9 2l-7 7" stroke="#555" strokeWidth="1.8" /></svg>
          </ChildControl>
        </ChildControls>
      </MenuBar>

      <Toolbar>
        <Grip $w={8} />
        <ToolButton $w={31} $gap={3}>{icons.newChart}<Caret /></ToolButton>
        <ToolButton $w={39} $gap={3}>{icons.profiles}<Caret /></ToolButton>
        <Divider $w={2} />
        <ToolButton $w={32}>{icons.market}</ToolButton>
        <ToolButton $w={27}>{icons.navigator}</ToolButton>
        <ToolButton $w={26}>{icons.favorites}</ToolButton>
        <ToolButton $w={31}>{icons.terminal}</ToolButton>
        <ToolButton $w={26}>{icons.tester}</ToolButton>
        <Divider $w={5} />
        <ToolButton $w={81} $gap={4}>{icons.newOrder}<ToolLabel>New Order</ToolLabel></ToolButton>
        <ToolButton $w={22}>{icons.editor}</ToolButton>
        <ToolButton $w={91} $gap={5}>{icons.auto}<ToolLabel>AutoTrading</ToolLabel></ToolButton>
        <Grip $w={6} />
        <ToolButton $w={28}>{icons.bars}</ToolButton>
        <ToolButton $w={24} $ml={2} $on>{icons.candles}</ToolButton>
        <ToolButton $w={28} $ml={2}>{icons.lineChart}</ToolButton>
        <Divider $w={4} />
        <ToolButton $w={31}>{icons.zoomIn}</ToolButton>
        <ToolButton $w={24}>{icons.zoomOut}</ToolButton>
        <ToolButton $w={32}>{icons.tile}</ToolButton>
        <Divider $w={2} />
        <ToolButton $w={25} $ml={5} $on>{icons.shift}</ToolButton>
        <ToolButton $w={25} $ml={2} $on>{icons.scroll}</ToolButton>
        <Divider $w={10} />
        <ToolButton $w={32} $gap={3}>{icons.indicators}<Caret /></ToolButton>
        <ToolButton $w={36} $gap={3}>{icons.clock}<Caret /></ToolButton>
        <ToolButton $w={34} $gap={3}>{icons.template}<Caret /></ToolButton>
        <Divider $w={2} />
        <Grip $w={8} />
        <ToolButton $w={24} $on>{icons.cursor}</ToolButton>
        <ToolButton $w={35}>{icons.cross}</ToolButton>
        <Divider $w={1} />
        <ToolButton $w={35}>{icons.vline}</ToolButton>
        <ToolButton $w={22}>{icons.hline}</ToolButton>
        <ToolButton $w={32}>{icons.trend}</ToolButton>
        <ToolButton $w={24}>{icons.channel}</ToolButton>
        <ToolButton $w={32}>{icons.fib}</ToolButton>
        <ToolButton $w={26}>{icons.textA}</ToolButton>
        <ToolButton $w={30}>{icons.textT}</ToolButton>
        <ToolButton $w={26}>{icons.cycle}</ToolButton>
        <ToolButton $w={30}>{icons.fibTime}</ToolButton>
        <ToolButton $w={26}>{icons.fibArc}</ToolButton>
        <ToolButton $w={38} $gap={2}>{icons.arrows}<Caret /></ToolButton>
        <Divider $w={1} />
        <Grip $w={4} />
        {periods.map(p => <PeriodButton key={p} $on={p === 'H1'}>{p}</PeriodButton>)}
        <Divider $w={1} />
        <SearchBox>{icons.search}</SearchBox>
        <CommunityButton>{icons.community}</CommunityButton>
      </Toolbar>

      <PriceChart />
      <RsiChart />
      <TimeAxis>
        {timeLabels.map(t => <TimeLabel key={t}>{t}</TimeLabel>)}
      </TimeAxis>

      <TabBar>
        {tabs.map(([name, w]) => <Tab key={name} $w={w}>{name}</Tab>)}
        <Tab $w={20}>U</Tab>
        <TabArrows>
          <svg width="5" height="9" viewBox="0 0 5 9"><path d="M5 0v9L0 4.5z" fill="#a8a594" /></svg>
          <svg width="5" height="9" viewBox="0 0 5 9"><path d="M0 0v9l5-4.5z" fill="#111" /></svg>
        </TabArrows>
      </TabBar>

      <StatusBar>
        <StatusCell $w={1205} $pad={2}>For Help, press F1</StatusCell>
        <StatusCell $w={109} $pad={6}>Default</StatusCell>
        <StatusCell $w={98.6} />
        <StatusCell $w={70} />
        <StatusCell $w={69.4} />
        <StatusCell $w={69} />
        <StatusCell $w={70} />
        <StatusCell $w={67.6} />
        <StatusCell $pad={5}>
          <svg width="23" height="10" viewBox="0 0 23 10">
            <path d="M1 1v9M4 1v9M7 1v9M10 1v9M13 3v7" stroke="#5c8a1e" strokeWidth="2" />
            <path d="M16 3v7M19 2v8" stroke="#c8b020" strokeWidth="2" />
            <path d="M22 1v9" stroke="#b02020" strokeWidth="2" />
          </svg>
          <span>6090/3 kb</span>
        </StatusCell>
      </StatusBar>
    </Body>
  </Window>
);

export default App;
